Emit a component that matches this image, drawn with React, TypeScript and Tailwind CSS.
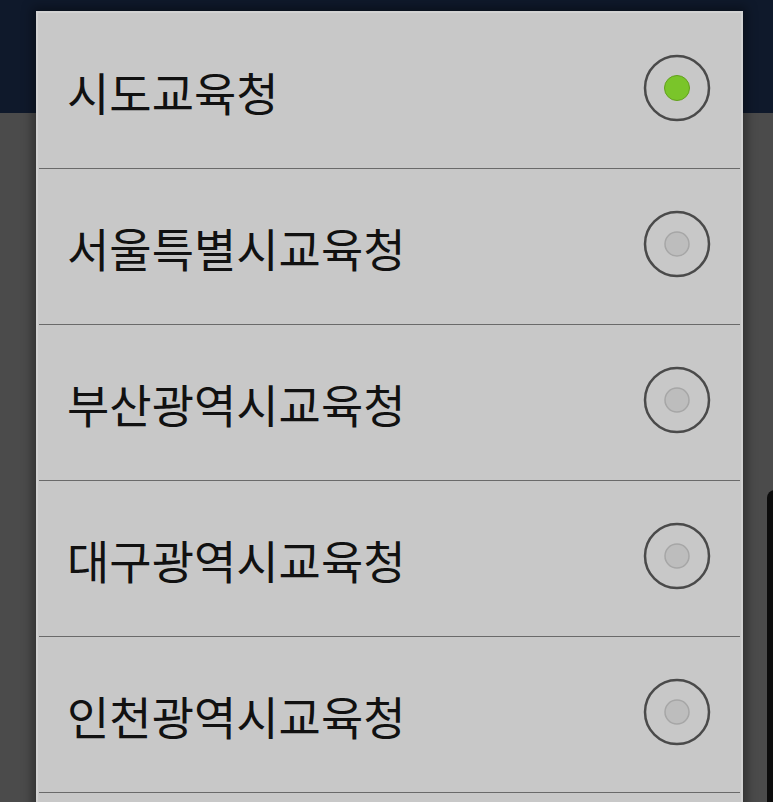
import React, { useState } from 'react'

const offices = [
  '시도교육청',
  '서울특별시교육청',
  '부산광역시교육청',
  '대구광역시교육청',
  '인천광역시교육청',
]

const Radio: React.FC<{ checked: boolean }> = ({ checked }) => (
  <svg width="68" height="68" viewBox="0 0 68 68" className="mb-[5px]">
    <circle cx="34" cy="34" r="32" fill="none" stroke="#4a4a4a" strokeWidth="2.5" />
    {checked ? (
      <circle cx="34" cy="34" r="12.5" fill="#7ac52a" stroke="#62a01c" strokeWidth="1" />
    ) : (
      <circle cx="34" cy="34" r="12" fill="#bdbdbd" stroke="#a6a6a6" strokeWidth="1.5" />
    )}
  </svg>
)

const App: React.FC = () => {
  const [selected, setSelected] = useState(0)

  return (
    <div className="relative h-[802px] w-[773px] overflow-hidden bg-[#4b4b4b] font-['Noto_Sans_CJK_KR',sans-serif]">
      <div className="h-[113px] bg-[#0f192b]" />
      {/* background list scrollbar peeking out on the right */}
      <div className="absolute left-[767px] top-[490px] h-[320px] w-[20px] rounded-tl-[8px] bg-[#0c0c0c]" />

      <div className="absolute left-[36px] top-[11px] h-[820px] w-[707px] border-2 border-b-0 border-[#d2d2d2] bg-[#c8c8c8] shadow-[0_0_10px_4px_rgba(0,0,0,0.35)]">
        {offices.map((name, i) => (
          <div key={name}>
            <button
              onClick={() => setSelected(i)}
              className="flex h-[155px] w-full items-center justify-between pl-[29px] pr-[30px] text-left"
            >
              <span className="text-[46px] leading-none text-[#111111]">{name}</span>
              <Radio checked={selected === i} />
            </button>
            <div className="mx-[1px] h-px bg-[#6a6a6a]" />
          </div>
        ))}
      </div>
    </div>
  )
}

export default App
